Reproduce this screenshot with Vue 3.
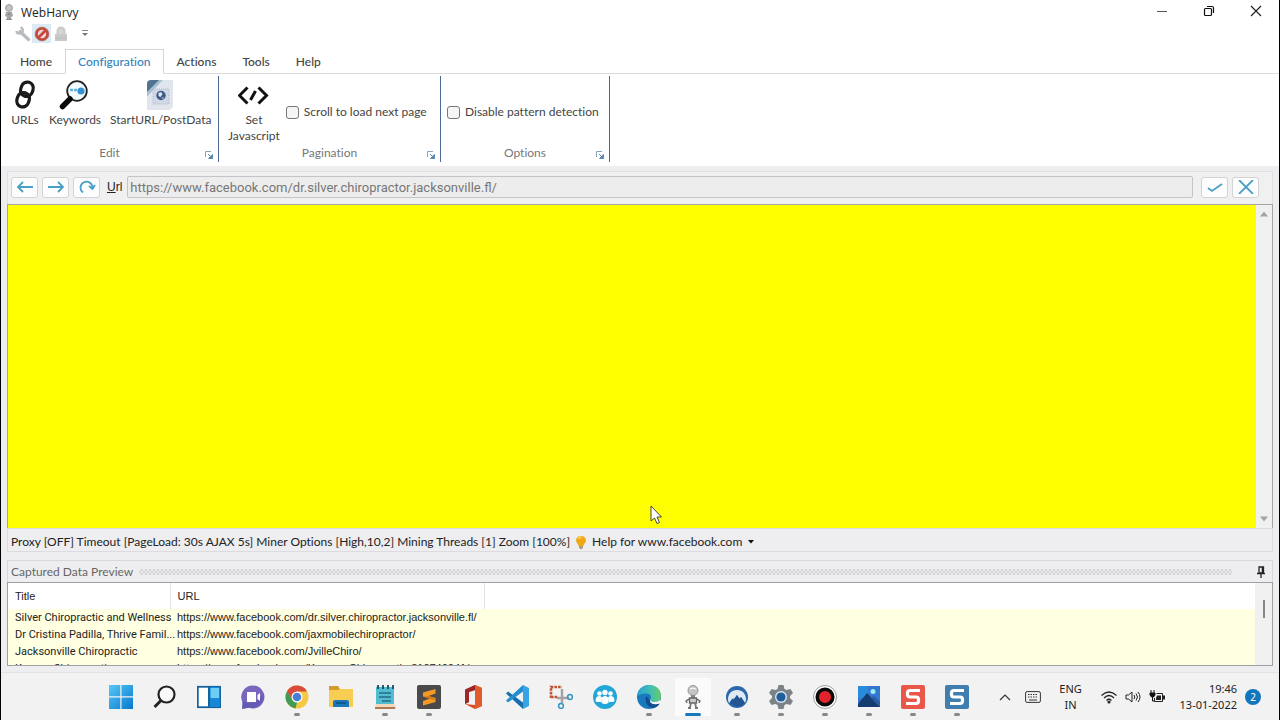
<script setup>
import { ref } from 'vue'

const tabs = ['Home', 'Configuration', 'Actions', 'Tools', 'Help']
const activeTab = ref('Configuration')
const scrollNext = ref(false)
const disablePattern = ref(false)
const url = ref('https://www.facebook.com/dr.silver.chiropractor.jacksonville.fl/')

const rows = [
  { title: 'Silver Chiropractic and Wellness', url: 'https://www.facebook.com/dr.silver.chiropractor.jacksonville.fl/' },
  { title: 'Dr Cristina Padilla, Thrive Famil...', url: 'https://www.facebook.com/jaxmobilechiropractor/' },
  { title: 'Jacksonville Chiropractic', url: 'https://www.facebook.com/JvilleChiro/' },
  { title: 'Kenney Chiropractic', url: 'https://www.facebook.com/Kenney-Chiropractic-310740041/' }
]
</script>

<template>
  <div class="window">
    <header class="titlebar">
      <svg class="app-icon" width="12" height="16" viewBox="0 0 12 16">
        <circle cx="6" cy="4" r="3.4" fill="#c4c4c4" stroke="#999" />
        <path d="M3 8h6l1 4-2 1v2H4v-2l-2-1z" fill="#a4a4a4" />
        <path d="M5 10h2M3 15.300h6" stroke="#777" />
      </svg>
      <h1>WebHarvy</h1>
      <div class="caption-buttons">
        <button aria-label="Minimize"><svg width="12" height="12" viewBox="0 0 12 12"><path d="M1 6.500h10" stroke="#555" /></svg></button>
        <button aria-label="Restore"><svg width="12" height="12" viewBox="0 0 12 12" fill="none" stroke="#111" stroke-width="1.200"><rect x="1.500" y="3.500" width="7" height="7" rx="1" /><path d="M4 1.500h5q1.500 0 1.500 1.500v5" /></svg></button>
        <button aria-label="Close"><svg width="12" height="12" viewBox="0 0 12 12"><path d="M1 1l10 10M11 1L1 11" stroke="#222" stroke-width="1.200" /></svg></button>
      </div>
    </header>

    <div class="quick">
      <button aria-label="Settings"><svg width="16" height="16" viewBox="0 0 16 16"><path d="M5 5.500L13.500 13.500" stroke="#b8bbbe" stroke-width="3.200" stroke-linecap="round" /><path d="M5.500 1.300A3.200 3.200 0 1 1 1.400 5" fill="none" stroke="#b8bbbe" stroke-width="2.400" /></svg></button>
      <button class="lit" aria-label="Stop"><svg width="16" height="16" viewBox="0 0 16 16"><circle cx="8" cy="8" r="6.800" fill="#c7473b" stroke="#b06a62" /><circle cx="8" cy="8" r="4.200" fill="#ead9da" /><path d="M4 12l8-8" stroke="#c7473b" stroke-width="2.600" /></svg></button>
      <button aria-label="Lock"><svg width="16" height="16" viewBox="0 0 16 16"><path d="M4.500 8V5a3.500 3.500 0 0 1 7 0v3" fill="#d5d5d5" stroke="#cacaca" stroke-width="2" /><path d="M2 8h12v7H2z" fill="#c9c9c9" /><path d="M2 12h12" stroke="#bcbcbc" /></svg></button>
      <button class="more" aria-label="Customize toolbar"><svg width="6" height="8" viewBox="0 0 6 8"><path d="M0 .5h6" stroke="#888" /><path d="M0 3h6L3 6z" fill="#777" /></svg></button>
    </div>

    <nav class="tabs">
      <button v-for="tab in tabs" :key="tab" :class="{ active: tab === activeTab }" @click="activeTab = tab">{{ tab }}</button>
    </nav>

    <section class="ribbon">
      <div class="group">
        <div class="tools">
          <button class="tool">
            <svg width="30" height="32" viewBox="0 0 30 32" fill="none" stroke="#1a1a1a" stroke-width="3.200"><rect x="11" y="3" width="12" height="14.500" rx="6" transform="rotate(18 17 10)" /><rect x="7" y="13.500" width="12" height="14.500" rx="6" transform="rotate(18 13 21)" /></svg>
            <span>URLs</span>
          </button>
          <button class="tool">
            <svg width="32" height="32" viewBox="0 0 32 32"><circle cx="18" cy="12" r="9.800" fill="#f4fbff" stroke="#222" stroke-width="1.800" /><path d="M11 20L3.500 27.500" stroke="#080808" stroke-width="5.500" stroke-linecap="round" /><path d="M11 11h8" stroke="#62b2dc" stroke-width="2.500" stroke-dasharray="3 1" /><circle cx="22" cy="12" r="3.600" fill="#3492ce" /></svg>
            <span>Keywords</span>
          </button>
          <button class="tool">
            <svg width="32" height="32" viewBox="0 0 32 32"><path d="M10 1h18v27l-3 3H2V11z" fill="#e1e6ee" /><path d="M2 11V5q0-4 4-4h11L2 17z" fill="#52738f" /><path d="M2 13L14 1h4L2 17z" fill="#a5bfd3" /><path d="M8 10h16v15H8z" fill="#d1d8e5" stroke="#aeb8cb" stroke-dasharray="1 1" /><circle cx="16" cy="16.500" r="4.700" fill="#405a86" /><path d="M13.500 14q3-2 4 1l-2 3-2-1z" fill="#d8e8f5" /><path d="M16 19l3-1-1 2z" fill="#a9bdd8" /></svg>
            <span>StartURL/PostData</span>
          </button>
        </div>
        <div class="group-name">Edit</div>
        <button class="launcher" aria-label="Edit options"><svg width="8" height="8" viewBox="0 0 8 8"><path d="M.5 6V.5H6" fill="none" stroke="#8aa3bd" /><path d="M3 3l2 2M7.500 3.500v4H3.500z" stroke="#5c89b2" fill="#5c89b2" /></svg></button>
      </div>

      <div class="group paging">
        <div class="tools">
          <button class="tool script">
            <svg width="32" height="32" viewBox="0 0 32 32" fill="none" stroke="#111" stroke-width="3"><path d="M9.500 8.500L1.500 16.500l8 8M20.500 8.500l8 8-8 8M17.500 12l-5 9" /></svg>
            <span>Set<br>Javascript</span>
          </button>
          <label class="check"><input v-model="scrollNext" type="checkbox">Scroll to load next page</label>
        </div>
        <div class="group-name">Pagination</div>
        <button class="launcher" aria-label="Pagination options"><svg width="8" height="8" viewBox="0 0 8 8"><path d="M.5 6V.5H6" fill="none" stroke="#8aa3bd" /><path d="M3 3l2 2M7.500 3.500v4H3.500z" stroke="#5c89b2" fill="#5c89b2" /></svg></button>
      </div>

      <div class="group options">
        <div class="tools">
          <label class="check"><input v-model="disablePattern" type="checkbox">Disable pattern detection</label>
        </div>
        <div class="group-name">Options</div>
        <button class="launcher" aria-label="Detection options"><svg width="8" height="8" viewBox="0 0 8 8"><path d="M.5 6V.5H6" fill="none" stroke="#8aa3bd" /><path d="M3 3l2 2M7.500 3.500v4H3.500z" stroke="#5c89b2" fill="#5c89b2" /></svg></button>
      </div>
    </section>

    <main class="workspace">
      <form class="address" @submit.prevent>
        <button type="button" aria-label="Back"><svg width="18" height="14" viewBox="0 0 18 14"><path d="M17 7H2M7 2L2 7l5 5" /></svg></button>
        <button type="button" aria-label="Forward"><svg width="18" height="14" viewBox="0 0 18 14"><path d="M1 7h15M11 2l5 5-5 5" /></svg></button>
        <button type="button" aria-label="Reload"><svg width="18" height="14" viewBox="0 0 18 14"><path d="M5 12.500A6 6 0 1 1 14.500 8M11 6l3.500 3L17 5" /></svg></button>
        <label for="url"><u>U</u>rl</label>
        <input id="url" v-model="url" type="text" readonly>
        <button type="submit" aria-label="Go"><svg width="18" height="14" viewBox="0 0 18 14"><path d="M2 8l4 3L16 4" /></svg></button>
        <button type="button" aria-label="Cancel"><svg width="18" height="14" viewBox="0 0 18 14"><path d="M2 0l14 14M16 0L2 14" /></svg></button>
      </form>

      <div class="view">
        <div class="page"></div>
        <div class="scroll">
          <svg width="8" height="6" viewBox="0 0 8 6"><path d="M0 5.500L4 .5l4 5z" fill="#a4a4a4" /></svg>
          <svg width="8" height="6" viewBox="0 0 8 6"><path d="M0 .5h8l-4 5z" fill="#a4a4a4" /></svg>
        </div>
        <svg class="cursor" width="14" height="20" viewBox="0 0 14 20"><path d="M1 1v15l3.500-3 2.500 5.500 2.500-1-2.500-5.500h4.500z" fill="#fff" stroke="#444" /></svg>
      </div>

      <div class="status">
        <span>Proxy [OFF] Timeout [PageLoad: 30s AJAX 5s] Miner Options [High,10,2] Mining Threads [1] Zoom [100%]</span>
        <button>
          <svg width="12" height="15" viewBox="0 0 12 15"><path d="M6 1a5 5 0 0 1 5 4.500C11 8 8.500 8.500 8.500 11h-5C3.500 8.500 1 8 1 5.500A5 5 0 0 1 6 1z" fill="#f0a817" /><path d="M3.500 4q1-2 3-2" stroke="#ffd765" fill="none" stroke-width="1.500" /><path d="M4 11h4v2L6 14.500 4 13z" fill="#a9a17c" /></svg>
          <span>Help for www.facebook.com</span>
          <svg class="drop" width="6" height="4" viewBox="0 0 6 4"><path d="M0 0h6L3 3.500z" fill="#111" /></svg>
        </button>
      </div>

      <section class="preview">
        <header>
          <h2>Captured Data Preview</h2>
          <i class="grip"></i>
          <button aria-label="Pin panel"><svg width="8" height="12" viewBox="0 0 8 12"><path d="M2 1h4.500v6H2zM0 7.500h8M4 8v4" fill="none" stroke="#222" stroke-width="1.300" /><path d="M5.500 1v6" stroke="#222" stroke-width="1.500" /></svg></button>
        </header>
        <div class="list">
          <div class="rows">
            <table>
              <colgroup><col class="c-title"><col class="c-url"><col></colgroup>
              <thead><tr><th>Title</th><th>URL</th><th></th></tr></thead>
              <tbody>
                <tr v-for="row in rows" :key="row.url"><td class="name">{{ row.title }}</td><td>{{ row.url }}</td><td></td></tr>
              </tbody>
            </table>
          </div>
          <div class="list-scroll"><i></i></div>
        </div>
      </section>
    </main>

    <footer class="taskbar">
      <div class="apps">
        <button aria-label="Start"><svg viewBox="0 0 24 24"><defs><linearGradient id="win" x2="1" y2="1"><stop stop-color="#55c8f5" /><stop offset="1" stop-color="#0878cf" /></linearGradient></defs><path d="M0 0h11.300v11.300H0zM12.500 0H24v11.300H12.500zM0 12.500h11.300V24H0zM12.500 12.500H24V24H12.500z" fill="url(#win)" /></svg></button>
        <button aria-label="Search"><svg viewBox="0 0 24 24" fill="none" stroke="#222" stroke-width="2.200"><circle cx="13.500" cy="9.500" r="8" fill="#f8f8f8" /><path d="M8 15.500L1.500 22" stroke-width="3" /></svg></button>
        <button aria-label="Widgets"><svg viewBox="0 0 24 24"><rect x=".8" y="1.800" width="22.400" height="20.400" fill="#fff" stroke="#16629d" stroke-width="1.800" /><path d="M12 2h11v20H12z" fill="#1687d6" /><path d="M13.500 3h8.500v10h-8.500z" fill="#6dcdf5" /><path d="M12 2v20" stroke="#16629d" stroke-width="2" /></svg></button>
        <button aria-label="Chat"><svg viewBox="0 0 24 24"><path d="M12 .5A11.500 11.500 0 1 1 8 22.800L1 24l1-6A11.500 11.500 0 0 1 12 .5z" fill="#7965bd" /><path d="M1 16q12 7 22-7-1 13-12 14-2 0-3-.5L1 24z" fill="#5553ae" opacity=".6" /><path d="M6 7h9v10H6zM16.500 10L19 8v8l-2.500-2z" fill="#fff" /></svg></button>
        <button class="running" aria-label="Chrome"><svg viewBox="0 0 24 24"><circle cx="12" cy="12" r="11.500" fill="#f6c945" /><path d="M2 6.300A11.500 11.500 0 0 1 22 6.500H12L7 15z" fill="#d84a3b" /><path d="M2 6.300L7.500 15 12 17.500 10.500 23.400A11.500 11.500 0 0 1 2 6.300z" fill="#409b55" /><circle cx="12" cy="12" r="5.500" fill="#fff" /><circle cx="12" cy="12" r="4.300" fill="#477fd8" /></svg></button>
        <button aria-label="File Explorer"><svg viewBox="0 0 24 24"><path d="M0 1h9l2 3h12v7H0z" fill="#d69b2d" /><path d="M0 5h9l2-1h13v18H0z" fill="#f7ce51" /><path d="M4 22v-5q0-2 2-2h12q2 0 2 2v5z" fill="#1b77b8" /><path d="M7 18h10" stroke="#104f85" stroke-width="1.500" /></svg></button>
        <button class="running" aria-label="Notepad"><svg viewBox="0 0 24 24"><path d="M3 2h18v18H3z" fill="#52bdd2" /><path d="M3 19h18l2 3v2H2v-2z" fill="#f3d9bc" /><path d="M2 23h20" stroke="#9a5a31" stroke-width="1.500" /><path d="M5 0v4M10 0v4M15 0v4M20 0v4" stroke="#174f5c" stroke-width="1.800" /><path d="M6 8h12M6 12h12M9 16h9" stroke="#246d89" stroke-width="1.500" /></svg></button>
        <button class="running" aria-label="Sublime Text"><svg viewBox="0 0 24 24"><rect width="24" height="24" rx="2" fill="#4a4a4a" /><path d="M18.500 4v4.500L11.500 11l7 2V17L6 20.500V16l7-2.500L6 11.500V7.500z" fill="#f49a24" /><path d="M11.500 11l7 2-2 2L6 11.500z" fill="#d67a1c" /></svg></button>
        <button aria-label="Office"><svg viewBox="0 0 24 24"><path d="M14 0l7 3v18l-7 3-10-5 10 1V5L8 7v10l-4 2V5z" fill="#d84b25" /><path d="M14 0L4 4.500V19l4-2V7l6-2z" fill="#9f2626" /><path d="M14 0l7 3v18l-7 3z" fill="#e25b2c" /></svg></button>
        <button aria-label="Visual Studio Code"><svg viewBox="0 0 24 24"><path d="M18 24L1 8.500 3 6.500 18 17.500z" fill="#176fae" /><path d="M18 0L1 15.500 3 17.500 18 6.500z" fill="#238fce" /><path d="M18 0l6 3v18l-6 3z" fill="#36a4e5" /></svg></button>
        <button aria-label="Snipping Tool"><svg viewBox="0 0 24 24" fill="none"><path d="M2 13V2h11" stroke="#bd5436" stroke-width="2.600" stroke-dasharray="2.600 1" /><path d="M2 12h7" stroke="#bd5436" stroke-width="2.400" stroke-dasharray="2.600 1" /><path d="M13 4v14M8 13h12" stroke="#a3a3a3" stroke-width="2.400" /><circle cx="21" cy="12" r="2.400" stroke="#3494c1" stroke-width="1.500" /><circle cx="12" cy="21" r="2.400" stroke="#3494c1" stroke-width="1.500" /></svg></button>
        <button aria-label="Teams"><svg viewBox="0 0 24 24"><circle cx="12" cy="12" r="12" fill="#23a7d9" /><g fill="#fff"><circle cx="6.500" cy="8.500" r="2.300" /><circle cx="12" cy="7.500" r="2.700" /><circle cx="17.500" cy="8.500" r="2.300" /><path d="M2.500 16q0-5 4-5 2 0 2.500 2-1 1-1 4H4zM21.500 16q0-5-4-5-2 0-2.500 2 1 1 1 4h4zM8.500 18q-1-7 3.500-7t3.500 7q-3.500 2-7 0z" /></g></svg></button>
        <button class="running" aria-label="Edge"><svg viewBox="0 0 24 24"><defs><linearGradient id="edge" x1="0" y1=".5" x2="1" y2=".5"><stop stop-color="#2a9fd8" /><stop offset=".6" stop-color="#45bfae" /><stop offset="1" stop-color="#66cb63" /></linearGradient></defs><circle cx="12" cy="12" r="12" fill="#1979bd" /><path d="M0 11C1 4 6 0 12 0c8 0 12 5 12 11 0 4-3 6-7 6-3 0-4-2-3-4 1-4-5-7-14-2z" fill="url(#edge)" /><path d="M9 11q-2 11 8 12 4-1 6-5-8 3-10-2-1-3-4-5z" fill="#124c91" /><path d="M14 13q-1 4 3 4 4 0 6-2l2 3q-9 3-12-1z" fill="#f3f3f3" /></svg></button>
        <button class="running current" aria-label="WebHarvy"><svg viewBox="0 0 24 24"><circle cx="12" cy="5.500" r="5" fill="#c5c5c5" stroke="#969696" /><path d="M9 4q3-2 6 0" stroke="#fff" fill="none" /><path d="M10 10h4v3h-4z" fill="#888" /><path d="M8.500 13h7v5h-7zM8 14l-3 2 1 2M16 14l3 2-1 2" fill="#ccc" stroke="#666" stroke-width="1.300" /><path d="M10 18l-1 4M14 18l1 4M7 23h3M14 23h3" stroke="#777" stroke-width="1.800" /></svg></button>
        <button class="running" aria-label="NordVPN"><svg viewBox="0 0 24 24"><circle cx="12" cy="12" r="11" fill="#2d68ad" /><path d="M4 18a9 9 0 1 1 16 0l-4-6-2 2-2-4-4 5-1-1z" fill="#dfeaf5" /><path d="M5 18l3-5 1 2 3-5 3 4 1-2 4 6q-7 7-15 0z" fill="#235591" /></svg></button>
        <button class="running" aria-label="Settings"><svg viewBox="0 0 24 24"><path d="M9.500 0h5l1 4 2 1 4-1L24 8l-3 3v2l3 3-2.500 4-4-1-2 1-1 4h-5l-1-4-2-1-4 1L0 16l3-3v-2L0 8l2.500-4 4 1 2-1z" fill="#7b8389" /><circle cx="12" cy="12" r="6" fill="#d8e5f0" /><circle cx="12" cy="12" r="4.600" fill="#205e9e" /></svg></button>
        <button class="running" aria-label="Recorder"><svg viewBox="0 0 24 24"><circle cx="12" cy="12" r="11.500" fill="#fff" stroke="#888" stroke-width=".8" /><circle cx="12" cy="12" r="7.800" fill="#e4222b" stroke="#090909" stroke-width="3.500" /></svg></button>
        <button class="running" aria-label="Photos"><svg viewBox="0 0 24 24"><path d="M1 1h22v21H1z" fill="#3477d0" /><path d="M1 1h10v12H1z" fill="#288cda" /><path d="M1 19L10 8l13 14H1z" fill="#153c70" /><path d="M14 13l3-2 6 6v5z" fill="#285da1" /><circle cx="16" cy="6.500" r="2.500" fill="#9cecf5" /></svg></button>
        <button class="running" aria-label="Snagit"><svg viewBox="0 0 24 24"><rect width="24" height="24" rx="2" fill="#e95749" /><path d="M19 5.500H9q-2.500 0-2.500 2.500v1.500Q6.500 12 9 12h6q2.500 0 2.500 2.500V16q0 2.500-2.500 2.500H5" fill="none" stroke="#fff" stroke-width="3.200" /></svg></button>
        <button class="running" aria-label="Snagit Editor"><svg viewBox="0 0 24 24"><rect width="24" height="24" rx="2" fill="#3f7eae" /><path d="M19 5.500H9q-2.500 0-2.500 2.500v1.500Q6.500 12 9 12h6q2.500 0 2.500 2.500V16q0 2.500-2.500 2.500H5" fill="none" stroke="#fff" stroke-width="3.200" /></svg></button>
      </div>
      <div class="tray">
        <button aria-label="Hidden icons"><svg width="12" height="12" viewBox="0 0 12 12"><path d="M1 9l5-5 5 5" fill="none" stroke="#333" stroke-width="1.200" /></svg></button>
        <button class="keys" aria-label="Touch keyboard"><svg width="16" height="12" viewBox="0 0 16 12"><rect x=".6" y=".6" width="14.800" height="10.800" rx="1.500" fill="none" stroke="#333" /><path d="M3 3.500h10M3 6h10" stroke="#333" stroke-dasharray="1.500 1" /><path d="M4 9h8" stroke="#333" /></svg></button>
        <div class="lang">ENG<br>IN</div>
        <svg width="16" height="14" viewBox="0 0 16 14" fill="none" stroke="#222" stroke-width="1.200"><path d="M.5 5.500q7.500-7 15 0M3 8q5-5 10 0M5.500 10.500q2.500-2.500 5 0" /><circle cx="8" cy="12" r="1" fill="#222" /></svg>
        <svg width="16" height="14" viewBox="0 0 16 14" fill="none" stroke="#222"><path d="M1 5h2.500L7 2v10L3.500 9H1zM9 5q1.500 2 0 4M11 3.500q3 3.500 0 7M13 2q4 5 0 10" /></svg>
        <svg width="16" height="14" viewBox="0 0 16 14"><path d="M2 0v3M5 0v3M1 3h5v2L4.500 7h-2L1 5zM3.500 7v4H6" stroke="#111" fill="none" /><path d="M1 3h5v2L4.500 7h-2L1 5z" fill="#111" /><path d="M7.500 3.500h6v8h-8V8" fill="none" stroke="#222" /><path d="M8 5.500h4v4.500H7V8zM14 5.500h2v4h-2z" fill="#222" /></svg>
        <div class="clock">19:46<br>13-01-2022</div>
        <button class="badge" aria-label="Notifications">2</button>
      </div>
    </footer>
  </div>
</template>

<style>
body { margin: 0; }
</style>

<style scoped>
* { box-sizing: border-box; }
button { margin: 0; padding: 0; border: 0; background: none; font: inherit; font-variant-ligatures: none; color: inherit; display: flex; align-items: center; justify-content: center; }
svg { display: block; flex: none; }
.window { min-height: 100vh; display: flex; flex-direction: column; background: #fff; border: solid #000; border-width: 0 1px; font: 12px/16px Lato, sans-serif; font-variant-ligatures: none; color: #444; overflow: hidden; }
.titlebar { display: flex; align-items: center; height: 24px; padding-left: 2px; gap: 6px; }
h1 { margin: 2px 0 0; font: 12px/16px "Open Sans", sans-serif; color: #222; }
.caption-buttons { display: flex; margin-left: auto; align-self: flex-start; }
.caption-buttons button { width: 47px; height: 22px; }
.quick { display: flex; height: 19px; padding-left: 12px; }
.quick button { width: 19px; height: 19px; }
.quick .lit { background: #dbeaf5; }
.quick .more { margin-left: 5px; }

.tabs { display: flex; align-items: flex-end; height: 31px; padding-left: 6px; border-bottom: 1px solid #dcdcdc; font-weight: 500; color: #444; }
.tabs button { height: 22px; padding: 0 13px; }
.tabs .active { height: 25px; padding: 0 12px; margin-bottom: -1px; border: 1px solid #d5d5d5; border-bottom-color: #fff; background: #fff; color: #3383bd; }

.ribbon { display: flex; height: 92px; padding: 2px 0 4px; }
.group { position: relative; display: flex; flex-direction: column; width: 218px; border-right: 1px solid #4c6a94; }
.group.paging { width: 222px; }
.group.options { width: 169px; }
.tools { display: flex; flex: 1; padding: 3px 0 0 9px; }
.tool { flex-direction: column; justify-content: flex-start; align-self: flex-start; text-align: center; margin-right: 9px; }
.tool span { margin-top: 1px; }
.tool.script { margin-right: 6px; }
.options .tools { padding-left: 6px; }
.check { display: flex; align-items: center; height: 66px; gap: 5px; white-space: nowrap; }
.check input { appearance: none; width: 13px; height: 13px; margin: 0; border: 1px solid #777; border-radius: 3px; background: #f5f5f5; }
.group-name { text-align: center; color: #777; height: 17px; }
.launcher { position: absolute; right: 5px; bottom: 3px; }

.workspace { flex: 1; display: flex; flex-direction: column; background: #eeeef1; padding: 5px 6px 6px; }
.address { display: flex; align-items: center; height: 33px; padding: 0 13px 2px 3px; border: 1px solid #e0e0e2; border-bottom: 0; background: #f0f0f0; }
.address button { width: 27px; height: 21px; margin-right: 4px; border: 1px solid #d3d3d5; border-radius: 3px; background: #fdfdfd; }
.address button:last-child { margin-right: 0; }
.address svg { fill: none; stroke: #4a9fc6; stroke-width: 1.800; }
.address label { margin: 0 5px 0 3px; font: 12px/16px "Liberation Sans", sans-serif; color: #222; }
.address input { flex: 1; min-width: 0; height: 22px; margin-right: 8px; padding: 0 2px; border: 1px solid #c5c5c7; border-radius: 2px; background: #ededed; font: 13px/16px Roboto, sans-serif; color: #777; outline: 0; }
.view { position: relative; flex: 1; min-height: 200px; display: flex; border: 1px solid #a5a5a5; border-bottom: 0; }
.page { flex: 1; background: #ff0; }
.scroll { width: 16px; display: flex; flex-direction: column; justify-content: space-between; align-items: center; padding: 6px 0; background: #f0f0f0; }
.cursor { position: absolute; left: 642px; top: 300px; }
.status { display: flex; align-items: center; height: 24px; padding: 4px 0 0 3px; border: 1px solid #dcdce0; color: #222; white-space: nowrap; }
.status button { margin-left: 5px; gap: 5px; }
.status .drop { margin-left: 1px; }
.preview { margin-top: 8px; border: 1px solid #d8d8dc; border-bottom: 0; }
.preview header { display: flex; align-items: center; height: 21px; padding: 0 7px 0 3px; }
h2 { margin: 0; font: 12px/16px Lato, sans-serif; color: #666; }
.grip { flex: 1; height: 6px; margin: 0 25px 0 6px; background: conic-gradient(#d2d2d7 25%, #ececf0 0 50%, #d2d2d7 0 75%, #ececf0 0) 0 0 / 4px 4px; }
.list { display: flex; height: 84px; margin: 0 -1px; border: 1px solid #a0a0a0; background: #ffffe1; overflow: hidden; font: 11px/17px "Liberation Sans", sans-serif; color: #222; }
.rows { flex: 1; overflow: hidden; }
table { width: 100%; table-layout: fixed; border-collapse: collapse; }
.c-title { width: 162px; }
.c-url { width: 314px; }
th { height: 26px; padding: 0 0 0 7px; text-align: left; font-weight: 400; background: #fff; border-right: 1px solid #e2e2e2; }
th:last-child { border-right: 0; }
td { height: 17px; padding: 0 0 0 7px; white-space: nowrap; }
.name { font-family: Roboto, sans-serif; }
.list-scroll { width: 17px; background: #f0f0f0; display: flex; justify-content: center; padding-top: 17px; }
.list-scroll i { width: 2px; height: 18px; background: #888; }

.taskbar { display: flex; height: 48px; border-top: 1px solid #e2e2e6; background: #f2f2f2; padding: 0 18px 0 98px; justify-content: space-between; color: #222; font: 11px/16px "Noto Sans", sans-serif; }
.apps { display: flex; padding-top: 2px; }
.apps button { position: relative; width: 44px; height: 44px; }
.apps svg { width: 24px; height: 24px; }
.running::after { content: ""; position: absolute; bottom: 3px; left: 19px; width: 6px; height: 3px; border-radius: 2px; background: #888; }
.apps .current { background: linear-gradient(#fbfbfb, #fbfbfb) center / 36px 38px no-repeat; }
.current::after { left: 14px; width: 16px; background: #1878bd; }
.tray { display: flex; align-items: center; gap: 8px; }
.tray .keys { margin-left: 6px; }
.lang { width: 28px; margin: 0 8px; text-align: center; }
.clock { margin-left: 7px; text-align: right; white-space: nowrap; }
.badge { width: 16px; height: 16px; border-radius: 8px; background: #1276bd; color: #fff; font-size: 10px; }
</style>
